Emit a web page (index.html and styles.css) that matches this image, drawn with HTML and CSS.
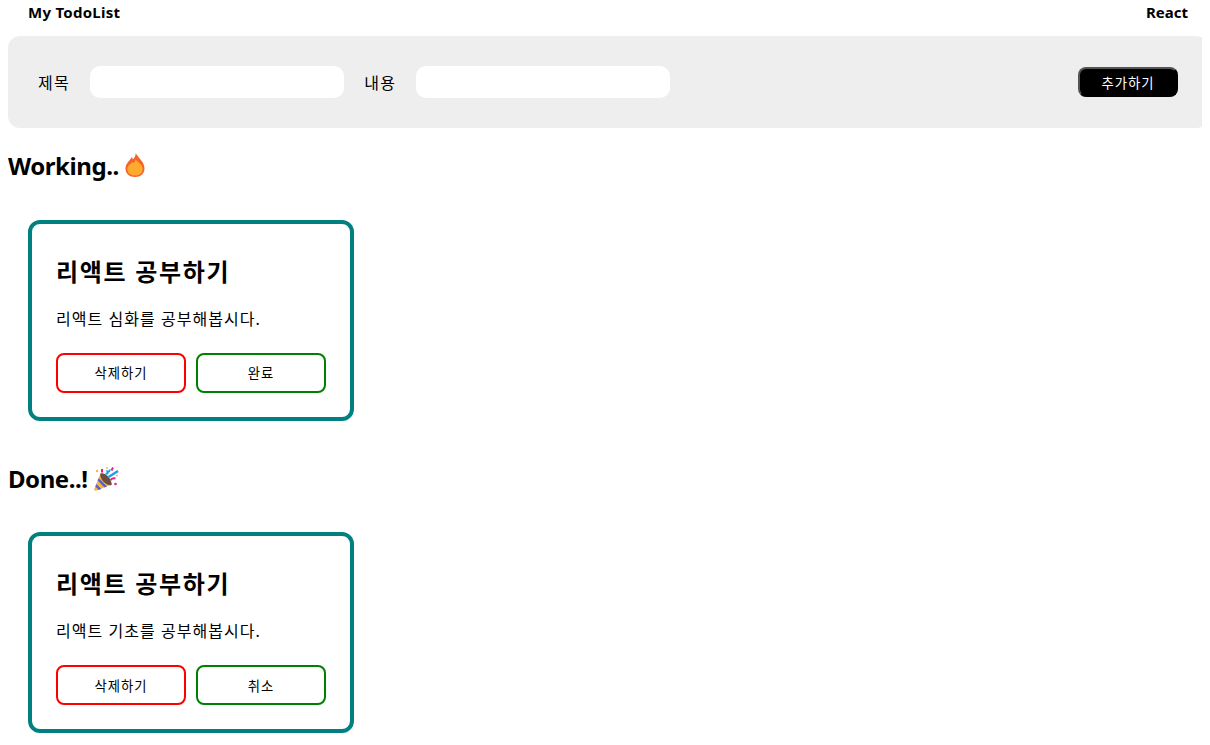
FILE: index.html
```html
<!DOCTYPE html>
<html lang="ko">
<head>
    <meta charset="UTF-8">
    <meta name="viewport" content="width=device-width, initial-scale=1.0">
    <title>My TodoList</title>
    <link rel="stylesheet" href="styles.css">
</head>
<body>
    <div class="layout">
        <header class="header">
            <div class="header-title">My TodoList</div>
            <div>React</div>
        </header>
        <form class="add-form">
            <div class="input-group">
                <label class="form-label">제목</label>
                <input class="add-input" type="text">
                <label class="form-label">내용</label>
                <input class="add-input" type="text">
            </div>
            <button class="add-btn" type="button">추가하기</button>
        </form>

        <h2 class="section-title">Working..
            <svg class="emoji fire" viewBox="0 0 20 24">
                <path fill="#f4632a" d="M10.500 0c.6 3-1 4.600-2.500 6.200-.5-.9-.9-1.500-1.500-2C5.800 6.800 .5 10 .5 15.500 .5 20.500 4.500 24 10 24s9.500-3.500 9.500-8.500C19.500 9 13.500 5 10.500 0z"/>
                <path fill="#ffa92e" d="M10.500 6.500c-.2 1.800-1.300 3-2.300 3.800-.3-.4-.6-.7-.9-1-1.500 1.500-5 3.300-5 6.600 0 4.200 3.500 6.600 7.700 6.600s7.700-2.400 7.700-6.600c0-4.100-4.500-6.400-7.200-9.400z"/>
            </svg>
        </h2>
        <div class="todo-list">
            <div class="todo-card">
                <h2 class="todo-title">리액트 공부하기</h2>
                <p class="todo-body">리액트 심화를 공부해봅시다.</p>
                <div class="todo-actions">
                    <button class="btn delete-btn" type="button">삭제하기</button>
                    <button class="btn toggle-btn" type="button">완료</button>
                </div>
            </div>
        </div>

        <h2 class="section-title">Done..!
            <svg class="emoji popper" viewBox="0 0 25 24">
                <path fill="#f6b73c" d="M6.500 6.500 0 22.500l1.500 1.500 16-6.500z"/>
                <path fill="#5b5fc7" d="M4.700 11 13 19.400l-2.600 1L3.700 13.600zM2.300 17 7.300 22l-2.500 1-3.400-3.400z"/>
                <path fill="#6d4c41" d="M6.500 6.500c2-1 6 1 8 3.500s3.800 6.500 3 8c-2 1-5.800-1-8-3.300S5.500 8.500 6.500 6.500z"/>
                <path fill="none" stroke="#1da1e2" stroke-width="2" d="M11.500 6.500c2 .5 2.500-.5 2-2 1.500.5 2.500-.5 2-2"/>
                <path fill="none" stroke="#e91e8c" stroke-width="2" d="M8 2v3.500M16.500 13c1.500-1.500 3-2 5-1.500"/>
                <path fill="none" stroke="#1da1e2" stroke-width="2.500" d="M14.500 10 24 4"/>
                <path fill="none" stroke="#e91e8c" stroke-width="2" d="M19 .5l-1.500 3"/>
                <circle cx="21.500" cy="17" r="1.300" fill="#e91e8c"/>
                <circle cx="3" cy="4" r="1.200" fill="#f6b73c"/>
                <circle cx="13" cy="1" r="1" fill="#f6b73c"/>
                <circle cx="23" cy="8.500" r="1" fill="#f6b73c"/>
            </svg>
        </h2>
        <div class="todo-list">
            <div class="todo-card">
                <h2 class="todo-title">리액트 공부하기</h2>
                <p class="todo-body">리액트 기초를 공부해봅시다.</p>
                <div class="todo-actions">
                    <button class="btn delete-btn" type="button">삭제하기</button>
                    <button class="btn toggle-btn" type="button">취소</button>
                </div>
            </div>
        </div>
    </div>
</body>
</html>
```

FILE: styles.css
```css
body {
    font-family: "Noto Sans", "Noto Sans CJK KR", sans-serif;
    margin: 0 8px;
    color: black;
    background-color: white;
}
.layout {
    width: 1200px;
}
.header {
    display: flex;
    justify-content: space-between;
    align-items: center;
    height: 24px;
    padding: 0 20px;
    margin-bottom: 12px;
    font-size: 15px;
    font-weight: bold;
}
.header-title {
    letter-spacing: 0.27px;
}
.add-form {
    display: flex;
    justify-content: space-between;
    align-items: center;
    height: 92px;
    box-sizing: border-box;
    padding: 0 30px;
    background-color: #eee;
    border-radius: 12px;
}
.input-group {
    display: flex;
    align-items: center;
    gap: 20px;
}
.form-label {
    font-size: 16px;
    letter-spacing: 0.085em;
}
.add-input {
    width: 254px;
    height: 32px;
    box-sizing: border-box;
    padding: 0 12px;
    border: none;
    border-radius: 10px;
    background-color: white;
}
.add-btn {
    width: 100px;
    height: 30px;
    color: white;
    font-family: inherit;
    font-size: 13.33px;
    letter-spacing: 0.07em;
    background-color: black;
    border: 2px outset black;
    border-radius: 8px;
    cursor: pointer;
}
.section-title {
    display: flex;
    align-items: center;
    gap: 6px;
    height: 32px;
    margin: 22px 0 17.5px;
    font-size: 24px;
    line-height: 32px;
    letter-spacing: -0.45px;
}
.todo-list + .section-title {
    margin-top: 42px;
}
.emoji {
    flex: none;
}
.fire {
    width: 20px;
    height: 24px;
    margin-bottom: 2px;
}
.popper {
    width: 25px;
    height: 24px;
}
.todo-list {
    display: flex;
    flex-wrap: wrap;
    gap: 12px;
    padding: 20px 20px 0;
}
.todo-card {
    width: 326px;
    height: 201px;
    box-sizing: border-box;
    padding: 32px 24px 24px;
    border: 4px solid teal;
    border-radius: 12px;
}
.todo-title {
    margin: 0 0 20px;
    font-size: 24px;
    line-height: 32px;
    letter-spacing: 0.07em;
}
.todo-body {
    margin: 0 0 23px;
    font-size: 16px;
    line-height: 22px;
    letter-spacing: 0.065em;
}
.todo-actions {
    display: flex;
    gap: 10px;
}
.btn {
    width: 130px;
    height: 40px;
    padding: 0;
    font-family: inherit;
    font-size: 13.33px;
    letter-spacing: 0.07em;
    color: black;
    background-color: white;
    border-radius: 8px;
    cursor: pointer;
}
.delete-btn {
    border: 2px solid red;
}
.toggle-btn {
    border: 2px solid green;
}
```
